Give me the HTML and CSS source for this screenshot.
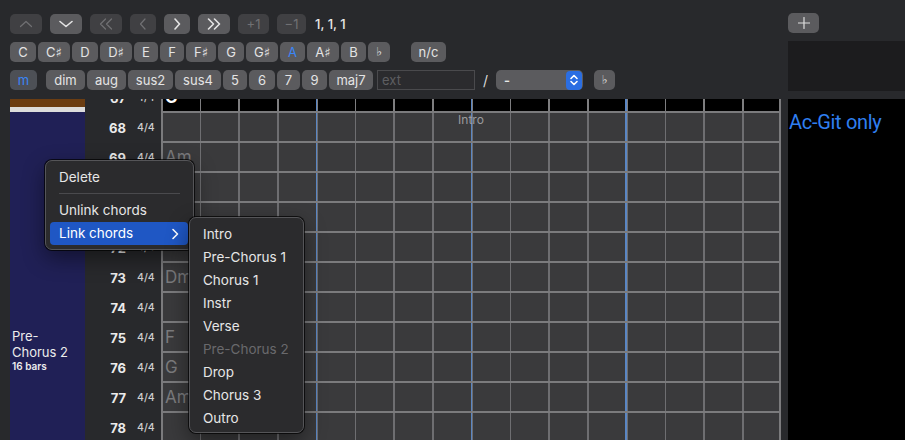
FILE: index.html
```html
<!DOCTYPE html>
<html>
<head>
<meta charset="utf-8">
<title>Chords</title>
<link rel="stylesheet" href="styles.css">
</head>
<body>
<div class="app">
  <header class="toolbar">
    <div class="tb-main">
      <div class="tb-row r1">
        <button class="btn dis w32"><svg width="14" height="8" viewBox="0 0 14 8"><path d="M1.5 6.5 L7 1.5 L12.5 6.5" class="ic"/></svg></button>
        <button class="btn w32"><svg width="14" height="8" viewBox="0 0 14 8"><path d="M1 1.5 L7 6.5 L13 1.5" class="ic bold"/></svg></button>
        <button class="btn dis w32"><svg width="16" height="12" viewBox="0 0 16 12"><path d="M7.5 1 L2.5 6 L7.5 11 M13.5 1 L8.5 6 L13.5 11" class="ic"/></svg></button>
        <button class="btn dis w26"><svg width="8" height="12" viewBox="0 0 8 12"><path d="M6 1 L1.5 6 L6 11" class="ic"/></svg></button>
        <button class="btn w26"><svg width="8" height="12" viewBox="0 0 8 12"><path d="M2 1 L6.5 6 L2 11" class="ic bold"/></svg></button>
        <button class="btn w32"><svg width="16" height="12" viewBox="0 0 16 12"><path d="M2.5 1 L7.5 6 L2.5 11 M8.5 1 L13.5 6 L8.5 11" class="ic bold"/></svg></button>
        <button class="btn dis w31">+1</button>
        <button class="btn dis w29">−1</button>
        <span class="pos">1, 1, 1</span>
      </div>
      <div class="tb-row keys">
        <button class="btn w26">C</button>
        <button class="btn w32">C♯</button>
        <button class="btn w26">D</button>
        <button class="btn w32">D♯</button>
        <button class="btn w24">E</button>
        <button class="btn w24">F</button>
        <button class="btn w30">F♯</button>
        <button class="btn w26">G</button>
        <button class="btn w32">G♯</button>
        <button class="btn w25 on">A</button>
        <button class="btn w32">A♯</button>
        <button class="btn w25">B</button>
        <button class="btn w22 flat">♭</button>
        <button class="btn w35 nc">n/c</button>
      </div>
      <div class="tb-row quals">
        <button class="btn w27 on sel">m</button>
        <button class="btn w39 dim">dim</button>
        <button class="btn w39">aug</button>
        <button class="btn w45">sus2</button>
        <button class="btn w46">sus4</button>
        <button class="btn w24">5</button>
        <button class="btn w26">6</button>
        <button class="btn w23">7</button>
        <button class="btn w25">9</button>
        <button class="btn w44">maj7</button>
        <input class="ext" type="text" placeholder="ext">
        <span class="slash">/</span>
        <div class="select">
          <span class="sel-val">-</span>
          <span class="sel-arrows"><svg width="16" height="18" viewBox="0 0 16 18"><path d="M5 7.5 L8 4.5 L11 7.5 M5 10.5 L8 13.5 L11 10.5" class="ic bold"/></svg></span>
        </div>
        <button class="btn w21 flat bass">♭</button>
      </div>
    </div>
    <div class="tb-side">
      <button class="btn w31"><svg width="12" height="12" viewBox="0 0 12 12"><path d="M6 0.5 V11.5 M0.5 6 H11.5" class="ic"/></svg></button>
      <div class="side-box"></div>
    </div>
  </header>

  <main class="main">
    <div class="sections">
      <div class="sec-prev"></div>
      <div class="sec-cur">
        <div class="sec-name">Pre-<br>Chorus 2</div>
        <div class="sec-bars">16 bars</div>
      </div>
    </div>
    <div class="bars">
      <div class="bars-inner">
        <div class="bar-row"><div class="bar-label"><span class="num">67</span><span class="ts">4/4</span></div><div class="cells now"><span class="chord cur">C</span></div></div>
        <div class="bar-row"><div class="bar-label"><span class="num">68</span><span class="ts">4/4</span></div><div class="cells titled"><span class="title">Intro</span></div></div>
        <div class="bar-row"><div class="bar-label"><span class="num">69</span><span class="ts">4/4</span></div><div class="cells"><span class="chord">Am</span></div></div>
        <div class="bar-row"><div class="bar-label"><span class="num">70</span><span class="ts">4/4</span></div><div class="cells"></div></div>
        <div class="bar-row"><div class="bar-label"><span class="num">71</span><span class="ts">4/4</span></div><div class="cells"></div></div>
        <div class="bar-row"><div class="bar-label"><span class="num">72</span><span class="ts">4/4</span></div><div class="cells"></div></div>
        <div class="bar-row"><div class="bar-label"><span class="num">73</span><span class="ts">4/4</span></div><div class="cells"><span class="chord">Dm</span></div></div>
        <div class="bar-row"><div class="bar-label"><span class="num">74</span><span class="ts">4/4</span></div><div class="cells"></div></div>
        <div class="bar-row"><div class="bar-label"><span class="num">75</span><span class="ts">4/4</span></div><div class="cells"><span class="chord">F</span></div></div>
        <div class="bar-row"><div class="bar-label"><span class="num">76</span><span class="ts">4/4</span></div><div class="cells"><span class="chord">G</span></div></div>
        <div class="bar-row"><div class="bar-label"><span class="num">77</span><span class="ts">4/4</span></div><div class="cells"><span class="chord">Am</span></div></div>
        <div class="bar-row"><div class="bar-label"><span class="num">78</span><span class="ts">4/4</span></div><div class="cells"></div></div>
      </div>
    </div>
    <div class="side-panel">Ac-Git only</div>
  </main>

  <div class="menu ctx">
    <div class="item">Delete</div>
    <div class="sep"></div>
    <div class="item">Unlink chords</div>
    <div class="item hl"><span>Link chords</span><svg width="8" height="12" viewBox="0 0 8 12"><path d="M2 1.5 L6.5 6 L2 10.5" class="ic bold"/></svg></div>
  </div>

  <div class="menu sub">
    <div class="item">Intro</div>
    <div class="item">Pre-Chorus 1</div>
    <div class="item">Chorus 1</div>
    <div class="item">Instr</div>
    <div class="item">Verse</div>
    <div class="item off">Pre-Chorus 2</div>
    <div class="item">Drop</div>
    <div class="item">Chorus 3</div>
    <div class="item">Outro</div>
  </div>
</div>
</body>
</html>
```

FILE: styles.css
```css
* { box-sizing: border-box; }

body {
  margin: 0;
  width: 905px;
  height: 440px;
  overflow: hidden;
  background: #28292c;
  color: #e5e5e5;
  font-family: Inter, "Noto Sans", "DejaVu Sans", sans-serif;
}

.app {
  position: relative;
  width: 905px;
  height: 440px;
  overflow: hidden;
}

/* ---------- toolbar ---------- */
.toolbar {
  display: flex;
  height: 99px;
}

.tb-main {
  width: 788px;
  padding: 14px 0 0 10px;
  display: flex;
  flex-direction: column;
  gap: 8px;
}

.tb-row {
  display: flex;
  align-items: center;
  height: 20px;
  gap: 2px;
}

.tb-row.r1 { gap: 8px; }

.btn {
  flex: none;
  height: 20px;
  padding: 0;
  border: 0;
  border-radius: 5px;
  background: #5b5b5e;
  color: #e4e4e4;
  font-family: Inter, "DejaVu Sans", sans-serif;
  font-size: 13px;
  line-height: 20px;
  display: flex;
  align-items: center;
  justify-content: center;
}

.btn.dis {
  background: #404043;
  color: #707073;
}

.btn.on { color: #3a86f7; }
.btn.sel { background: #4d5056; }
.btn.flat { font-family: "DejaVu Sans", sans-serif; font-size: 12px; font-weight: 700; }
.btn.nc { margin-left: 19px; }
.btn.dim { margin-left: 7px; }
.btn.bass { margin-left: 9px; }

.ic {
  fill: none;
  stroke: currentColor;
  stroke-width: 1.2;
  stroke-linecap: round;
  stroke-linejoin: round;
}
.ic.bold { stroke-width: 1.6; }

.w21 { width: 21px; }
.w22 { width: 22px; }
.w23 { width: 23px; }
.w24 { width: 24px; }
.w25 { width: 25px; }
.w26 { width: 26px; }
.w27 { width: 27px; }
.w29 { width: 29px; }
.w30 { width: 30px; }
.w31 { width: 31px; }
.w32 { width: 32px; }
.w35 { width: 35px; }
.w39 { width: 39px; }
.w44 { width: 44px; }
.w45 { width: 45px; }
.w46 { width: 46px; }

.pos {
  margin-left: 1px;
  font-size: 13px;
  font-weight: 500;
  color: #e8e8e8;
}

.ext {
  flex: none;
  width: 98px;
  height: 20px;
  margin-left: 2px;
  padding: 0 0 0 4px;
  border: 1px solid #4a4a4d;
  background: #2b2b2e;
  color: #ddd;
  font-family: Inter, sans-serif;
  font-size: 13px;
  outline: none;
}
.ext::placeholder { color: #5e5e61; }

.slash {
  flex: none;
  width: 17px;
  text-align: center;
  font-size: 14px;
  color: #dcdcdc;
}

.select {
  flex: none;
  width: 87px;
  height: 20px;
  border-radius: 5px;
  background: #5b5b5e;
  display: flex;
  align-items: center;
  justify-content: space-between;
  padding: 0 1px 0 8px;
}

.sel-val {
  font-size: 13px;
  font-weight: 600;
  color: #e8e8e8;
}

.sel-arrows {
  width: 16px;
  height: 19px;
  border-radius: 4px;
  background: #2b6ee2;
  color: #fff;
  display: flex;
  align-items: center;
  justify-content: center;
}

.tb-side {
  width: 117px;
  padding-top: 13px;
  display: flex;
  flex-direction: column;
  gap: 8px;
}

.tb-side .btn { color: #dedede; }

.side-box {
  height: 50px;
  background: #1c1c1e;
}

/* ---------- main ---------- */
.main {
  display: flex;
  height: 341px;
  overflow: hidden;
}

.sections {
  flex: none;
  width: 75px;
  margin-left: 10px;
  display: flex;
  flex-direction: column;
}

.sec-prev {
  height: 8px;
  background: #6b3d12;
}

.sec-cur {
  flex: 1;
  border-top: 5px solid #dcdcdc;
  background: #202056;
  padding: 216px 0 0 2px;
  color: #ececec;
}

.sec-name {
  font-size: 13px;
  line-height: 16px;
}

.sec-bars {
  font-size: 10px;
  line-height: 12px;
  font-weight: 600;
}

.bars {
  flex: none;
  width: 696px;
  overflow: hidden;
}

.bars-inner {
  margin-top: -18px;
}

.bar-row {
  display: flex;
  height: 30px;
}

.bar-label {
  flex: none;
  width: 76px;
  padding-top: 3px;
  display: flex;
  align-items: center;
}

.num {
  width: 41px;
  text-align: right;
  font-size: 13px;
  font-weight: 700;
  color: #ebebeb;
}

.ts {
  margin-left: 11px;
  font-size: 10.5px;
  font-weight: 500;
  color: #cfcfcf;
}

.cells {
  --vline: #6e6e71;
  --bg: #3a3a3c;
  flex: none;
  width: 620px;
  height: 30px;
  border-top: 2px solid #7b7b7d;
  box-shadow: inset 2px 0 #7b7b7d, inset -2px 0 #7b7b7d;
  background:
    linear-gradient(to right,
      transparent 154.5px, #5a86c3 154.5px, #5a86c3 156.5px, transparent 156.5px,
      transparent 309.5px, #5a86c3 309.5px, #5a86c3 311.5px, transparent 311.5px,
      transparent 464.5px, #5a86c3 464.5px, #5a86c3 466.5px, transparent 466.5px),
    repeating-linear-gradient(to right, var(--vline) 0, var(--vline) 1.5px, transparent 1.5px, transparent 38.75px),
    var(--bg);
}

.cells.now {
  --vline: #7e7e80;
  --bg: #000;
}

.chord {
  display: block;
  padding-left: 4px;
  font-size: 17px;
  line-height: 28px;
  color: #7b7b7d;
}

.chord.cur {
  color: #fff;
  font-weight: 700;
}

.cells.titled {
  display: flex;
  justify-content: center;
}

.title {
  font-size: 12px;
  line-height: 14px;
  color: #9a9a9c;
}

.side-panel {
  flex: none;
  width: 117px;
  margin-left: 7px;
  background: #000;
  padding: 11px 0 0 1px;
  font-family: Roboto, Inter, sans-serif;
  font-size: 20px;
  line-height: 24px;
  letter-spacing: -0.3px;
  color: #2f7ff0;
  white-space: nowrap;
}

/* ---------- menus ---------- */
.menu {
  position: absolute;
  background: #2b2b2d;
  border: 1px solid #555558;
  border-radius: 7px;
  box-shadow: 0 0 0 1px rgba(0, 0, 0, 0.7), 0 8px 22px rgba(0, 0, 0, 0.45);
  font-size: 13.5px;
  color: #e6e6e6;
}

.menu .item {
  height: 23px;
  line-height: 23px;
  white-space: nowrap;
}

.ctx {
  left: 45px;
  top: 160px;
  width: 149px;
  padding: 5px 5px 4px 4px;
}

.ctx .item {
  padding-left: 9px;
  border-radius: 4px;
}

.ctx .item.hl {
  background: #1f57c4;
  color: #fff;
  display: flex;
  align-items: center;
  justify-content: space-between;
  padding-right: 9px;
}

.ctx .sep {
  height: 1px;
  margin: 4px 8px 5px 9px;
  background: #4a4a4d;
}

.sub {
  left: 189px;
  top: 217px;
  width: 115px;
  padding: 5px 5px 2px 5px;
}

.sub .item { padding-left: 8px; }
.sub .item.off { color: #69696c; }
```
